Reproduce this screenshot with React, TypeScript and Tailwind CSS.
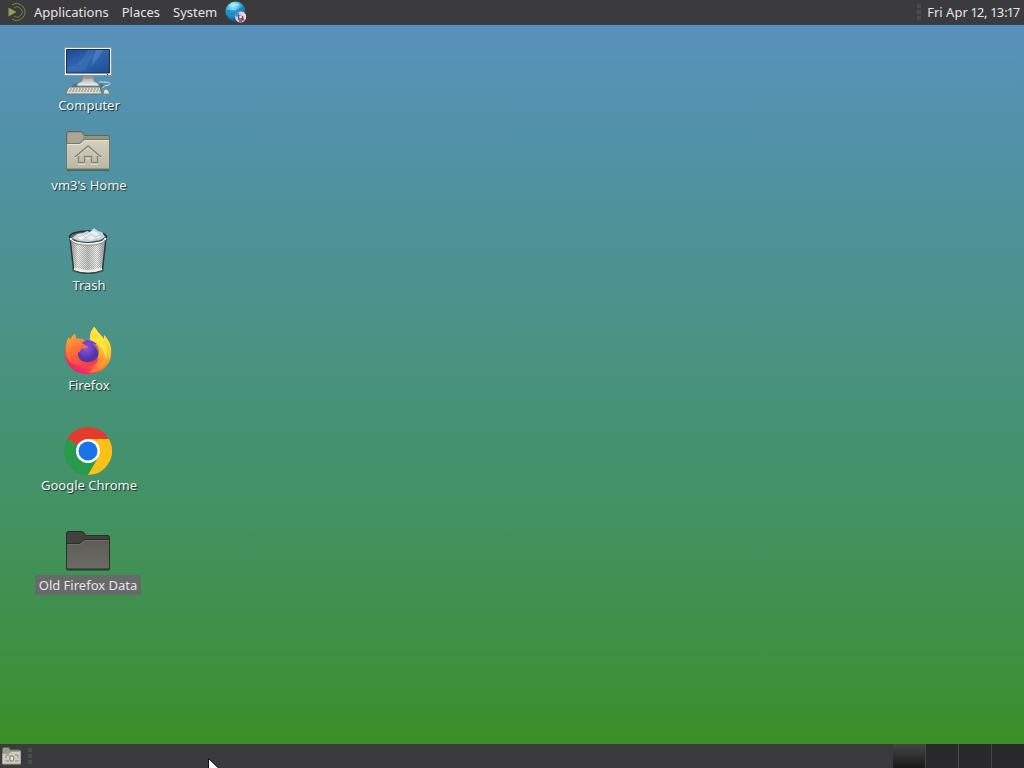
import type { ReactNode } from "react";

function MateLogo() {
  return (
    <svg width="20" height="20" viewBox="0 0 20 20" fill="none" aria-hidden="true">
      <path d="M1.5 5.5 9.5 10l-8 4.5Z" fill="#87a556" />
      <path d="M5 2.8A8.5 8.5 0 1 1 5 17.2" stroke="#6f8a49" strokeWidth="1" />
      <path d="M7 6a5 5 0 1 1 0 8" stroke="#6d8647" strokeWidth="1" />
    </svg>
  );
}

function GlobeIcon() {
  return (
    <svg width="22" height="22" viewBox="0 0 22 22" aria-hidden="true">
      <defs>
        <radialGradient id="globe" cx="0.38" cy="0.22" r="0.8">
          <stop offset="0" stopColor="#a5ecfb" />
          <stop offset="0.4" stopColor="#45b7e4" />
          <stop offset="0.75" stopColor="#157bb5" />
          <stop offset="1" stopColor="#075078" />
        </radialGradient>
      </defs>
      <circle cx="10.5" cy="10.5" r="10" fill="url(#globe)" />
      <path d="M1 10c4-3 6 1 10-1s5-4 8-3c2 4 1 7-1 9-4-3-6-2-9-1s-6-1-8-4Z" fill="#176fae" opacity=".55" />
      <path d="M4 5c3-4 8-4 11-1-3 2-7 1-11 1Z" fill="#b8f3fc" opacity=".5" />
      <circle cx="15.5" cy="16" r="5.5" fill="#c2ccdc" />
      <path d="M10 15a5.5 5.5 0 0 1 4-4v5Z" fill="#5189ce" />
      <path d="M16 10.5a5.5 5.5 0 0 1 4.5 8L16 16.5Z" fill="#ebd5d5" />
      <path d="m13 14 5 1 1 4-4 2-2-3Z" fill="#634b87" />
      <path d="M14 18h3v3h-3Z" fill="#c35552" />
      <circle cx="15.5" cy="16" r="1.3" fill="#f4f4fa" />
    </svg>
  );
}

function ComputerIcon() {
  return (
    <svg width="48" height="48" viewBox="0 0 48 48" aria-hidden="true">
      <defs>
        <linearGradient id="screen" x1="0" y1="0" x2="1" y2="1">
          <stop offset="0" stopColor="#174791" />
          <stop offset="0.45" stopColor="#3167af" />
          <stop offset="1" stopColor="#1c4c91" />
        </linearGradient>
        <linearGradient id="stand" x1="0" y1="0" x2="0" y2="1">
          <stop offset="0" stopColor="#8e9898" />
          <stop offset="1" stopColor="#f7f7f5" />
        </linearGradient>
      </defs>
      <ellipse cx="24" cy="39" rx="16" ry="4" fill="#254652" opacity=".35" />
      <path d="M19 29h10l1 5 5 3v2H13v-2l5-3Z" fill="url(#stand)" stroke="#7f8b8f" />
      <path d="M.5.5h47v28H.5Z" fill="#eff1ef" stroke="#8d9697" />
      <path d="M2.5 2.5h43v23.5h-43Z" fill="url(#screen)" stroke="#102f62" />
      <path d="M3 19C15 22 18 11 24 3h6c-2 7-7 14-9 21H3Z" fill="#568dcb" opacity=".22" />
      <path d="M32 3h7c-3 6-7 11-12 16 2-6 2-11 5-16Z" fill="#88b6e6" opacity=".25" />
      <path d="M19 31h10" stroke="#c07c73" strokeWidth="1" />
      <path d="M35 35c5 0 12 0 11 2s-8 1-7 4" fill="none" stroke="#dbe1df" />
      <path d="m5 40-3 6v1h36l-2-7Z" fill="#dddcd1" stroke="#6c7573" />
      <path d="M6 42h30M5 44h32" stroke="#85857c" strokeWidth="1" strokeDasharray="2 1" />
      <path d="M40 43q2-2 4 0l2 4h-7Z" fill="#e5e5dc" stroke="#7d827e" />
      <circle cx="43.5" cy="27.5" r=".7" fill="#39454b" />
    </svg>
  );
}

function HomeFolderIcon() {
  return (
    <svg width="48" height="48" viewBox="0 0 48 48" aria-hidden="true">
      <defs>
        <linearGradient id="home-folder" x1="0" y1="0" x2="0" y2="1">
          <stop offset="0" stopColor="#d3d0bf" />
          <stop offset="1" stopColor="#bab7a5" />
        </linearGradient>
      </defs>
      <path d="M3 43h42" stroke="#213f3e" strokeWidth="2" opacity=".5" />
      <path d="M2.5 42V6.5q0-2 2-2h12q2 0 3 2l1 2H44q1.5 0 1.5 2V42Z" fill="#969482" stroke="#626557" />
      <path d="M4 8V6h13l2 3v3l-4 4H4Z" fill="#a9a692" />
      <path d="M2.5 16.5H15q2 0 3-2l1-1q1-1 3-1h23.5V42h-43Z" fill="url(#home-folder)" stroke="#777969" />
      <path d="M3.5 17.5H15q3 0 4-2l1-1q1-1 3-1h21.5" fill="none" stroke="#e8e6da" />
      <path d="m11 31 13-11 13 11M14.5 30v7h6v-6h7v6h6v-7" fill="none" stroke="#e0ded0" strokeWidth="1.5" />
      <path d="m11 30 13-11 13 11M14.5 29v6.5h6v-6h7v6h6V29" fill="none" stroke="#858474" strokeWidth="1.5" />
    </svg>
  );
}

function TrashIcon() {
  return (
    <svg width="48" height="48" viewBox="0 0 48 48" aria-hidden="true">
      <defs>
        <linearGradient id="metal">
          <stop offset="0" stopColor="#8f9290" />
          <stop offset="0.22" stopColor="#f0f1ed" />
          <stop offset="0.5" stopColor="#c4c6c2" />
          <stop offset="0.75" stopColor="#f0f0ed" />
          <stop offset="1" stopColor="#8c908e" />
        </linearGradient>
        <pattern id="mesh" width="2" height="2" patternUnits="userSpaceOnUse">
          <path d="M0 0h1v1H0ZM1 1h1v1H1Z" fill="#686d6b" opacity=".4" />
        </pattern>
      </defs>
      <ellipse cx="24" cy="43" rx="16" ry="4" fill="#193f38" opacity=".55" />
      <path d="m6 11 3.500 31q5 4 14.500 4t14.500-4L42 11Z" fill="url(#metal)" stroke="#303835" strokeWidth="1.500" />
      <path d="m8 16 2.500 24q13 5 27 0L40 16Z" fill="url(#mesh)" />
      <path d="M10 42q14 5 28 0" fill="none" stroke="#eeeeeb" strokeWidth="2" />
      <ellipse cx="24" cy="10" rx="18.500" ry="6" fill="#606b6d" stroke="#29312f" strokeWidth="1.500" />
      <path d="m8 11 5-4 6-1 4-2 3 1 4-4 4 3 4 1 3 5-5 3-12 2-9-1Z" fill="#c5d3da" />
      <path d="m12 10 4-3 6 1 3-2 4-3 5 3 3 4-5 1-5 2-6-2-4 2Z" fill="#eaf1f4" />
      <path d="m13 10 6-2 3 3 5-4 4 3 5-2" fill="none" stroke="#b3c5cd" />
      <path d="M6.500 11c1 8 34 8 35 0" fill="none" stroke="#f1f2ef" strokeWidth="2" />
      <path d="M7 13c2 7 32 7 34 0" fill="none" stroke="#858c89" />
    </svg>
  );
}

function FirefoxIcon() {
  return (
    <svg width="48" height="48" viewBox="0 0 48 48" aria-hidden="true">
      <defs>
        <linearGradient id="flame" x1="0.85" y1="0" x2="0.2" y2="1">
          <stop offset="0" stopColor="#fff247" />
          <stop offset="0.35" stopColor="#ffc630" />
          <stop offset="0.6" stopColor="#ff7139" />
          <stop offset="0.85" stopColor="#f42f56" />
          <stop offset="1" stopColor="#e91a77" />
        </linearGradient>
        <linearGradient id="fox" x1="0" y1="0" x2="0.6" y2="1">
          <stop offset="0" stopColor="#ffb43c" />
          <stop offset="0.5" stopColor="#ff6d35" />
          <stop offset="1" stopColor="#f53b50" />
        </linearGradient>
        <radialGradient id="violet" cx=".4" cy=".3">
          <stop offset="0" stopColor="#8e59ec" />
          <stop offset="1" stopColor="#5535a4" />
        </radialGradient>
      </defs>
      <path d="M30 0c3 2 4 6 8 9l2 3V8c6 6 8 12 7 20-1 11-10 19-23 19C10 47 1 38 1 25c0-7 2-11 4-15l1 3c1-3 3-5 5-6l1 5c4-1 7 0 10 2l4 1c-1-7 1-12 4-15Z" fill="url(#flame)" />
      <path d="M26 14c2-6 3-10 4-14 3 4 5 7 8 10 5 6 7 12 4 22-2-9-5-16-16-18Z" fill="#ffe43d" />
      <circle cx="24" cy="25" r="11" fill="url(#violet)" />
      <path d="M5 10l1 4c1-3 3-5 5-7l1 5c4-1 7 0 10 3l2 5c-1 2-5 1-7 2 0 2-2 3-3 4-1 6 5 10 11 9 5 0 7-4 11-4-3 6-9 10-17 8C7 39 1 32 2 22c0-5 1-9 3-12Z" fill="url(#fox)" />
      <path d="M22 15c5-2 11 0 14 5 3 6 2 12-2 16 8-2 11-9 8-17 5 12 0 25-16 27 16-1 24-15 20-30 3 15-5 29-22 30 10-5 12-17 9-23-2-5-6-7-11-8Z" fill="#ffb52c" opacity=".45" />
      <path d="M18 16c3-4 9-4 15 1-3 0-4 0-5 1l-5 1Z" fill="#7545d3" />
    </svg>
  );
}

function ChromeIcon() {
  return (
    <svg width="48" height="48" viewBox="0 0 48 48" aria-hidden="true">
      <path d="M24 24 3.200 12A24 24 0 0 1 44.800 12Z" fill="#e33b2e" />
      <path d="M24 24 3.200 12A24 24 0 0 0 24 48l10.400-18Z" fill="#279b4b" />
      <path d="M24 12h20.800A24 24 0 0 1 24 48l10.400-18Z" fill="#fbc116" />
      <circle cx="24" cy="24" r="12" fill="#fff" />
      <circle cx="24" cy="24" r="9.500" fill="#1a73e8" />
    </svg>
  );
}

function DarkFolderIcon() {
  return (
    <svg width="48" height="48" viewBox="0 0 48 48" aria-hidden="true">
      <defs>
        <linearGradient id="dark-folder" x1="0" y1="0" x2="0" y2="1">
          <stop offset="0" stopColor="#5d5c57" />
          <stop offset="1" stopColor="#6c6b66" />
        </linearGradient>
      </defs>
      <path d="M3 43h42" stroke="#164a25" strokeWidth="2" opacity=".55" />
      <path d="M2.5 42V6q0-1.5 2-1.5h13q2 0 3 2l1 2H44q1.5 0 1.5 2V42Z" fill="#41423e" stroke="#292e27" />
      <path d="M2.5 16.5H15q2 0 3-2l1-1q1-1 3-1h23.5V42h-43Z" fill="url(#dark-folder)" stroke="#2b2e28" />
      <path d="M3.5 17.5H15q3 0 4-2l1-1q1-1 3-1h21.5" fill="none" stroke="#70706a" />
    </svg>
  );
}

function DesktopFolderIcon() {
  return (
    <svg width="20" height="20" viewBox="0 0 20 20" aria-hidden="true">
      <path d="M.5 17V3q0-1.5 1.5-1.5h5L8 4h9.500q1 0 1 1v12Z" fill="#9a9c8d" stroke="#686c60" />
      <path d="M.5 7.500H7l2-2h9.500V18H.5Z" fill="#ceccbd" stroke="#a3a496" />
      <path d="M4 9h3m6 0h3M4 9v3m12-3v3M4 15v-1m0 1h3m6 0h3m0 0v-1" stroke="#89887c" fill="none" />
      <path d="M8 10h3l1 2-1 3H8Z" fill="#e8e6d9" stroke="#78786d" />
    </svg>
  );
}

function Grip() {
  return (
    <span className="flex flex-col gap-0.5" aria-hidden="true">
      <span className="h-1 w-1 bg-[#4b4c4e]" />
      <span className="h-1 w-1 bg-[#4b4c4e]" />
      <span className="h-1 w-1 bg-[#4b4c4e]" />
    </span>
  );
}

type Launcher = { label: string; icon: ReactNode; selected?: boolean };

const launchers: Launcher[] = [
  { label: "Computer", icon: <ComputerIcon /> },
  { label: "vm3's Home", icon: <HomeFolderIcon /> },
  { label: "Trash", icon: <TrashIcon /> },
  { label: "Firefox", icon: <FirefoxIcon /> },
  { label: "Google Chrome", icon: <ChromeIcon /> },
  { label: "Old Firefox Data", icon: <DarkFolderIcon />, selected: true },
];

export default function App() {
  return (
    <div className="flex min-h-screen flex-col overflow-hidden bg-[#3c8f25] font-['Noto_Sans',sans-serif] text-[13px] leading-5 text-[#e4e4e4]">
      <header className="flex h-[25px] items-center justify-between border-b border-[#334656] bg-[#3b3b3d]">
        <nav className="flex items-center pl-[7px]" aria-label="Main menu">
          <MateLogo />
          <div className="flex gap-[13px] pl-[7px]">
            <button type="button">Applications</button>
            <button type="button">Places</button>
            <button type="button">System</button>
          </div>
          <button type="button" className="ml-2" aria-label="Web browser">
            <GlobeIcon />
          </button>
        </nav>
        <div className="flex items-center gap-1.5 pr-1">
          <Grip />
          <button type="button" className="proportional-nums">Fri Apr 12, 13:17</button>
        </div>
      </header>

      <main className="flex-1 bg-linear-to-b from-[#5891bc] to-[#3c8f25] pt-[22px]">
        <ul className="flex w-44 flex-col items-center">
          {launchers.map(({ label, icon, selected }, index) => (
            <li key={label} className={index === 0 ? "h-20" : "h-25"}>
              <button type="button" className="flex flex-col items-center">
                {icon}
                <span
                  className={
                    selected
                      ? "rounded-xs bg-[#68696a] px-1"
                      : "pr-0.5 pl-1 text-[#f2f2f2] [text-shadow:1px_1px_1px_#183333]"
                  }
                >
                  {label}
                </span>
              </button>
            </li>
          ))}
        </ul>
      </main>

      <footer className="relative flex h-6 items-center overflow-hidden bg-[#3b3b3d]">
        <button type="button" className="ml-0.5" aria-label="Show desktop">
          <DesktopFolderIcon />
        </button>
        <span className="pl-1.5">
          <Grip />
        </span>
        <div className="ml-auto flex h-full w-[131px]" aria-label="Workspaces">
          <button type="button" aria-label="Workspace 1" className="flex-1 bg-linear-to-b from-[#454545] via-[#303030] via-50% to-[#181818]" />
          <button type="button" aria-label="Workspace 2" className="flex-1 border-l border-[#454545] bg-[#29292b]" />
          <button type="button" aria-label="Workspace 3" className="flex-1 border-l border-[#454545] bg-[#29292b]" />
          <button type="button" aria-label="Workspace 4" className="flex-1 border-l border-[#454545] bg-[#29292b]" />
        </div>
        <svg className="absolute top-3.5 left-52" width="14" height="20" viewBox="0 0 14 20" aria-hidden="true">
          <path d="M.5.5v17l4-4 3 6 3-1.500-3-5.500H13Z" fill="#fff" stroke="#101010" />
        </svg>
      </footer>
    </div>
  );
}
